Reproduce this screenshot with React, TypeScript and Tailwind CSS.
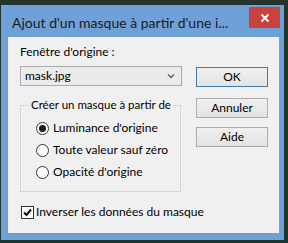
import React from "react";

const font = { fontFamily: 'Lato, "Segoe UI", sans-serif' };

function Radio({ checked, label }: { checked?: boolean; label: string }) {
  return (
    <div className="flex h-[22px] items-center">
      <div className="flex h-[13px] w-[13px] items-center justify-center rounded-full border border-[#333] bg-white">
        {checked && <div className="h-[7px] w-[7px] rounded-full bg-[#1a1a1a]" />}
      </div>
      <span className="ml-[4px] whitespace-nowrap text-[12px] leading-[16px] text-black">{label}</span>
    </div>
  );
}

function Btn({ label, def }: { label: string; def?: boolean }) {
  return (
    <div
      className={
        "flex h-[20px] w-[72px] items-center justify-center border bg-gradient-to-b from-[#f0f0f0] to-[#e3e3e3] text-[12px] leading-[16px] text-black " +
        (def ? "border-[#3d7bad]" : "border-[#acacac]")
      }
    >
      {label}
    </div>
  );
}

export default function App() {
  return (
    <div className="h-[243px] w-[288px] overflow-hidden bg-[#22342b] pl-[1px] pr-[4px] pt-[5px]" style={font}>
      <div className="flex h-[235px] w-[283px] flex-col bg-[#6fa0d8]">
        <div className="flex h-[32px] shrink-0 items-start">
          <div className="ml-[11px] mt-[8px] whitespace-nowrap text-[14px] leading-[20px] text-[#1b1b1b]">
            Ajout d'un masque à partir d'une i...
          </div>
          <div className="ml-auto mr-[4px] mt-[2px] flex h-[21px] w-[31px] shrink-0 items-center justify-center bg-[#c9433c]">
            <svg width="10" height="10" viewBox="0 0 10 10">
              <path d="M1.5 1.5 L8.5 8.5 M8.5 1.5 L1.5 8.5" stroke="white" strokeWidth="1.8" />
            </svg>
          </div>
        </div>
        <div className="ml-[7px] mr-[5px] flex h-[196px] bg-[#f0f0f0] pl-[12px] pt-[7px]">
          <div className="flex w-[162px] flex-col">
            <div className="h-[16px] text-[12px] leading-[16px] text-black">Fenêtre d'origine :</div>
            <div className="mt-[6px] flex h-[20px] items-center border border-[#acacac] bg-[#ebebeb] pl-[4px] pr-[6px]">
              <span className="text-[12px] leading-[16px] text-black">mask.jpg</span>
              <svg className="ml-auto" width="8" height="6" viewBox="0 0 8 6">
                <path d="M1 1.5 L4 4.5 L7 1.5" stroke="#606060" strokeWidth="1.5" fill="none" />
              </svg>
            </div>
            <fieldset className="mt-[11px] w-[161px] border border-[#d5d5d5] p-0 pb-[8px]">
              <legend className="ml-[8px] whitespace-nowrap px-[2px] text-[11.5px] leading-[16px] text-black">
                Créer un masque à partir de
              </legend>
              <div className="pl-[15px] pt-[4px]">
                <Radio checked label="Luminance d'origine" />
                <Radio label="Toute valeur sauf zéro" />
                <Radio label="Opacité d'origine" />
              </div>
            </fieldset>
            <div className="mt-[12px] flex h-[16px] items-center pl-[1px]">
              <div className="flex h-[13px] w-[13px] shrink-0 items-center justify-center border border-[#333] bg-white">
                <svg width="11" height="11" viewBox="0 0 11 11">
                  <path d="M2 5.5 L4.5 8 L9 2.5" stroke="#111" strokeWidth="2" fill="none" />
                </svg>
              </div>
              <span className="ml-[2px] whitespace-nowrap text-[12px] leading-[16px] text-black">
                Inverser les données du masque
              </span>
            </div>
          </div>
          <div className="ml-[14px] flex flex-col pt-[23px]">
            <Btn label="OK" def />
            <div className="mt-[11px]">
              <Btn label="Annuler" />
            </div>
            <div className="mt-[9px]">
              <Btn label="Aide" />
            </div>
          </div>
        </div>
      </div>
    </div>
  );
}
